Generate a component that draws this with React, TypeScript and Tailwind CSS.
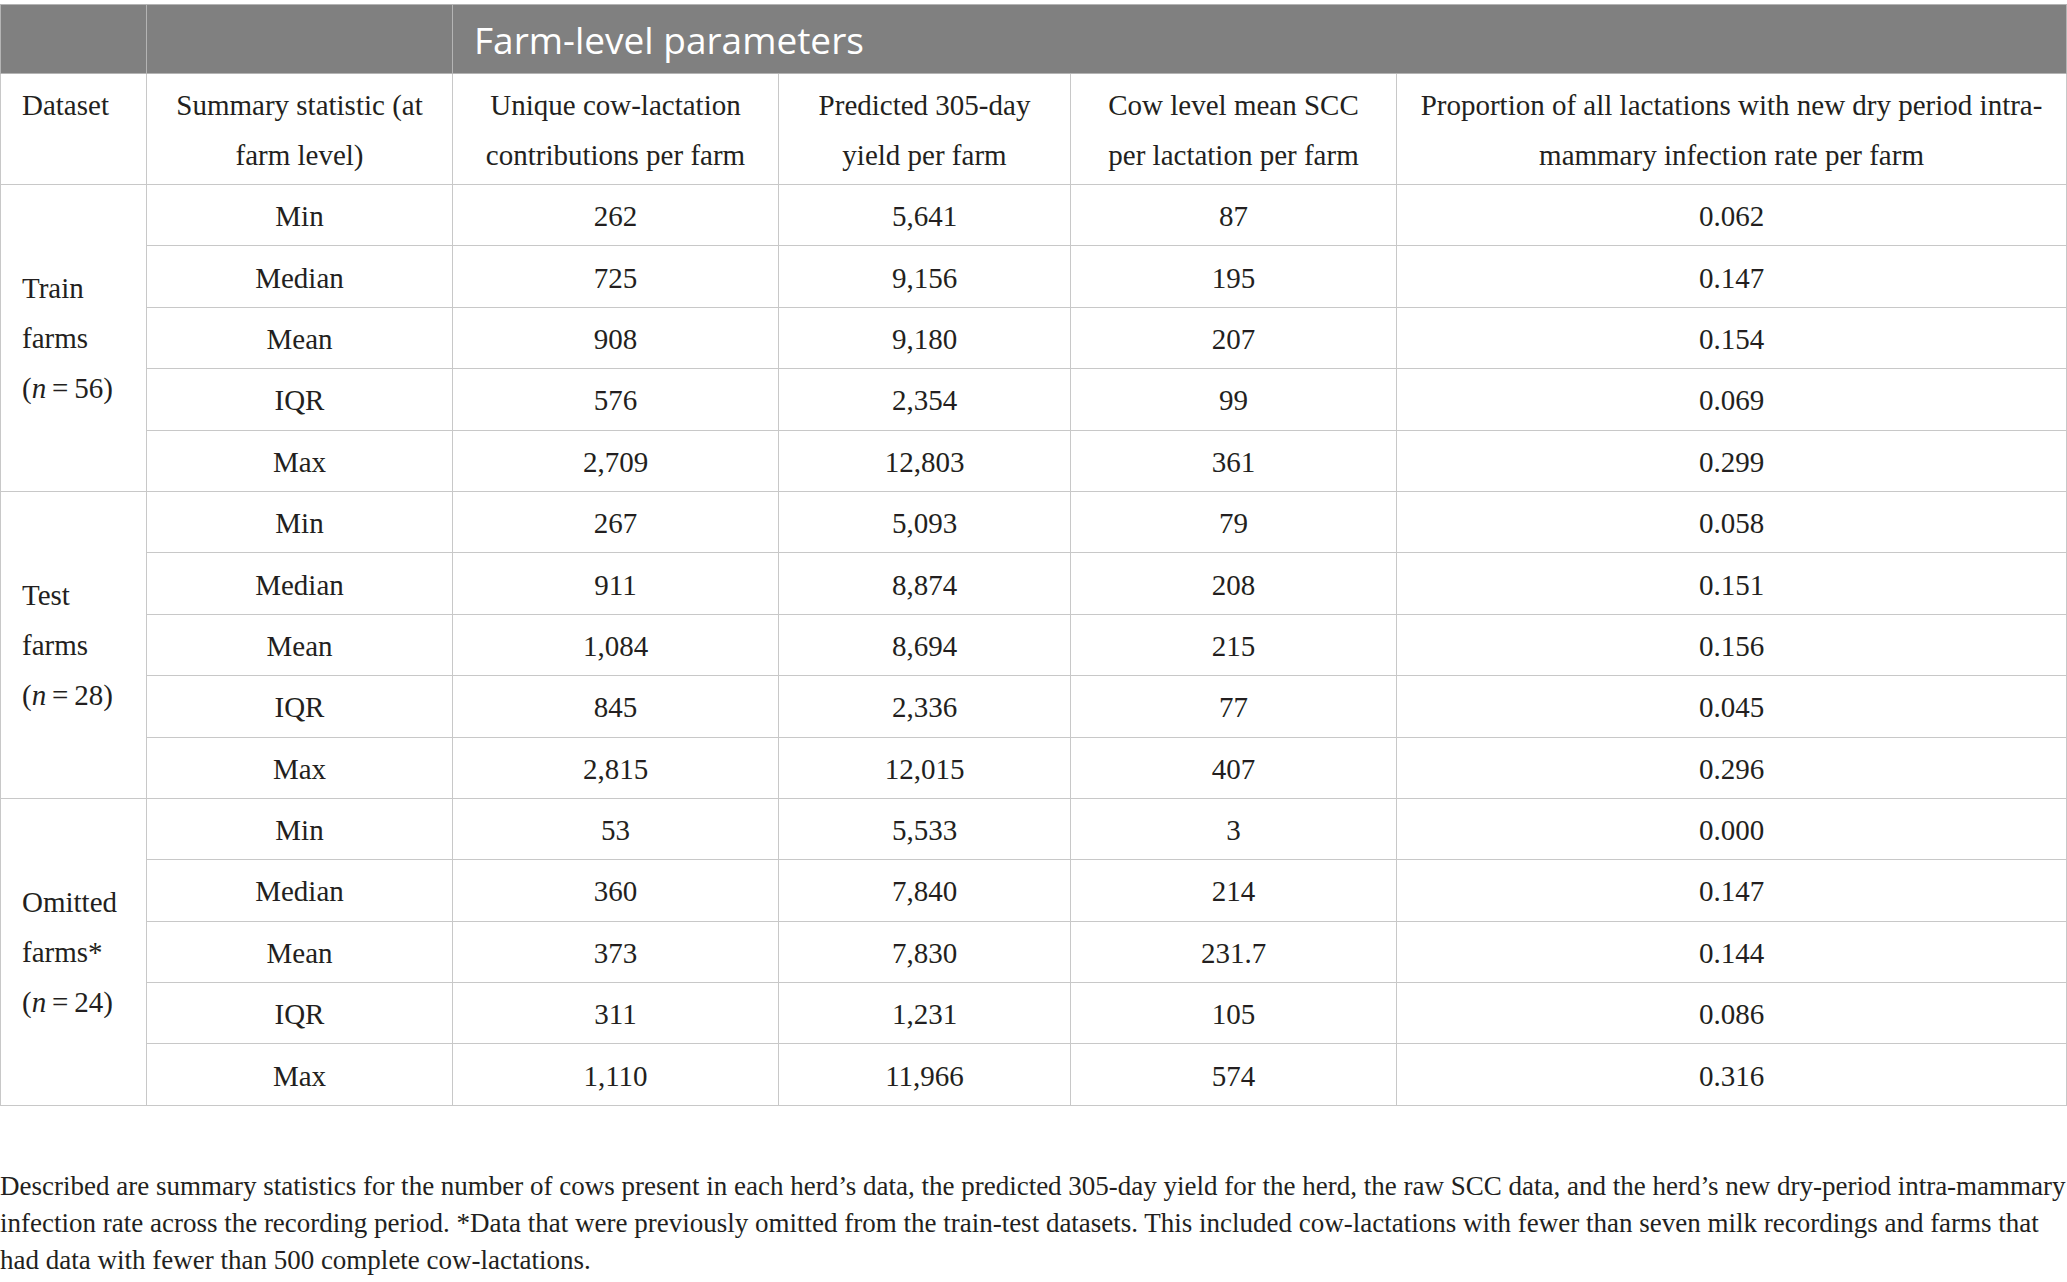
import React from "react";

type Group = {
  label: React.ReactNode;
  rows: [string, string, string, string, string][];
};

const groups: Group[] = [
  {
    label: (
      <>
        Train
        <br />
        farms
        <br />(<i>n</i>{"\u2009=\u2009"}56)
      </>
    ),
    rows: [
      ["Min", "262", "5,641", "87", "0.062"],
      ["Median", "725", "9,156", "195", "0.147"],
      ["Mean", "908", "9,180", "207", "0.154"],
      ["IQR", "576", "2,354", "99", "0.069"],
      ["Max", "2,709", "12,803", "361", "0.299"],
    ],
  },
  {
    label: (
      <>
        Test
        <br />
        farms
        <br />(<i>n</i>{"\u2009=\u2009"}28)
      </>
    ),
    rows: [
      ["Min", "267", "5,093", "79", "0.058"],
      ["Median", "911", "8,874", "208", "0.151"],
      ["Mean", "1,084", "8,694", "215", "0.156"],
      ["IQR", "845", "2,336", "77", "0.045"],
      ["Max", "2,815", "12,015", "407", "0.296"],
    ],
  },
  {
    label: (
      <>
        Omitted
        <br />
        farms*
        <br />(<i>n</i>{"\u2009=\u2009"}24)
      </>
    ),
    rows: [
      ["Min", "53", "5,533", "3", "0.000"],
      ["Median", "360", "7,840", "214", "0.147"],
      ["Mean", "373", "7,830", "231.7", "0.144"],
      ["IQR", "311", "1,231", "105", "0.086"],
      ["Max", "1,110", "11,966", "574", "0.316"],
    ],
  },
];

export default function App() {
  return (
    <div
      className="bg-white text-[#231f20] pt-[4px] w-[2067px]"
      style={{ fontFamily: "'Liberation Serif', 'Times New Roman', serif" }}
    >
      <table className="w-[2066px] border-collapse table-fixed text-[29px] leading-[50px]">
        <colgroup>
          <col className="w-[146px]" />
          <col className="w-[306px]" />
          <col className="w-[326px]" />
          <col className="w-[292px]" />
          <col className="w-[326px]" />
          <col className="w-[670px]" />
        </colgroup>
        <thead>
          <tr className="h-[69px] bg-[#808080]">
            <th className="border border-[#b4b4b4] p-0"></th>
            <th className="border border-[#b4b4b4] p-0"></th>
            <th
              colSpan={4}
              className="border border-[#b4b4b4] text-left pl-[21px] pt-[2px] font-normal text-white text-[37px] leading-[50px]"
              style={{ fontFamily: "'Open Sans', 'Noto Sans', sans-serif" }}
            >
              Farm-level parameters
            </th>
          </tr>
          <tr className="h-[111px]">
            <th className="border border-[#c8c8c8] font-normal text-left pl-[21px] align-top pt-[6px]">
              Dataset
            </th>
            <th className="border border-[#c8c8c8] font-normal text-center whitespace-nowrap pt-[6px] pb-[4px]">
              Summary statistic (at
              <br />
              farm level)
            </th>
            <th className="border border-[#c8c8c8] font-normal text-center whitespace-nowrap pt-[6px] pb-[4px]">
              Unique cow-lactation
              <br />
              contributions per farm
            </th>
            <th className="border border-[#c8c8c8] font-normal text-center whitespace-nowrap pt-[6px] pb-[4px]">
              Predicted 305-day
              <br />
              yield per farm
            </th>
            <th className="border border-[#c8c8c8] font-normal text-center whitespace-nowrap pt-[6px] pb-[4px]">
              Cow level mean SCC
              <br />
              per lactation per farm
            </th>
            <th className="border border-[#c8c8c8] font-normal text-center whitespace-nowrap pt-[6px] pb-[4px]">
              Proportion of all lactations with new dry period intra-
              <br />
              mammary infection rate per farm
            </th>
          </tr>
        </thead>
        <tbody>
          {groups.map((g, gi) =>
            g.rows.map((r, ri) => (
              <tr key={`${gi}-${ri}`} className="h-[61.4px]">
                {ri === 0 && (
                  <td
                    rowSpan={5}
                    className="border border-[#c8c8c8] text-left pl-[21px] align-middle"
                  >
                    {g.label}
                  </td>
                )}
                {r.map((c, ci) => (
                  <td
                    key={ci}
                    className="border border-[#c8c8c8] text-center pt-[2px] pb-0 px-0 whitespace-nowrap"
                  >
                    {c}
                  </td>
                ))}
              </tr>
            ))
          )}
        </tbody>
      </table>
      <p className="mt-[62px] text-[27px] leading-[37px] whitespace-nowrap">
        Described are summary statistics for the number of cows present in each herd’s data, the predicted 305-day yield for the herd, the raw SCC data, and the herd’s new dry-period intra-mammary
        <br />
        infection rate across the recording period. *Data that were previously omitted from the train-test datasets. This included cow-lactations with fewer than seven milk recordings and farms that
        <br />
        had data with fewer than 500 complete cow-lactations.
      </p>
    </div>
  );
}
